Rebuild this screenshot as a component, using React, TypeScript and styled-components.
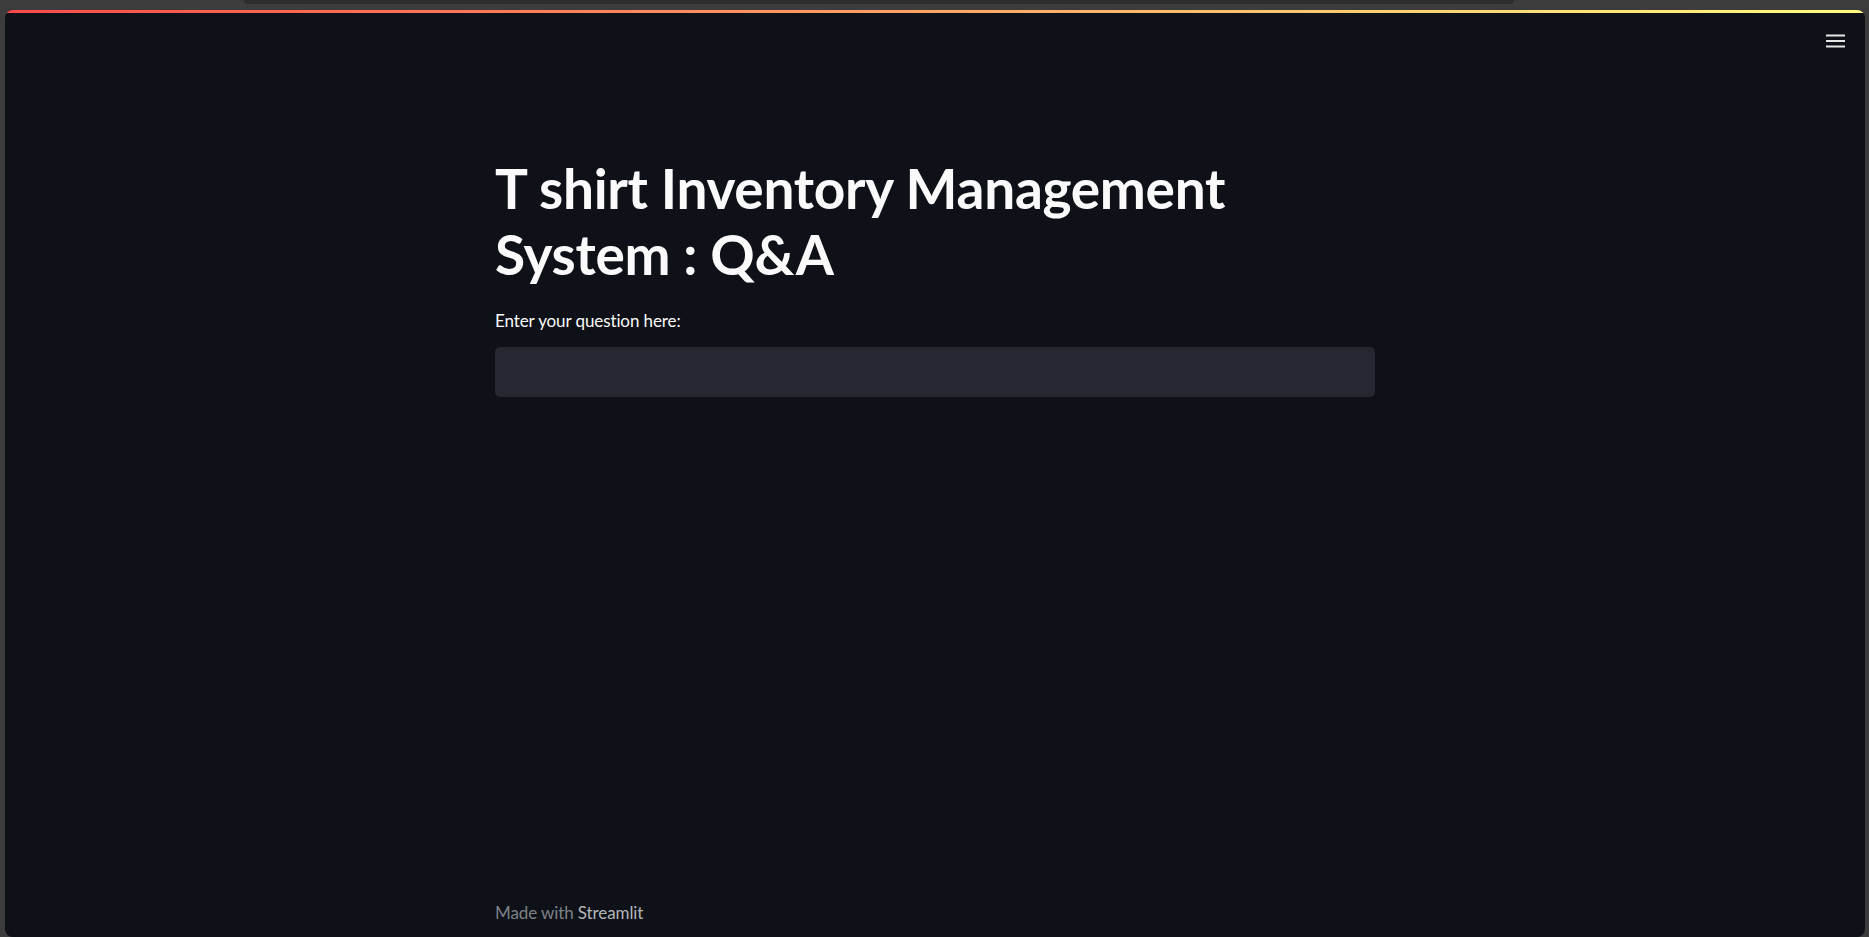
import React from "react";
import styled, { createGlobalStyle } from "styled-components";

const Global = createGlobalStyle`
  html, body { margin: 0; padding: 0; background: #3c3c3c; }
  body { font-family: Lato, "Noto Sans", sans-serif; overflow: hidden; }
  * { box-sizing: border-box; }
`;

const Screen = styled.div`
  width: 1869px;
  height: 937px;
  display: flex;
  flex-direction: column;
  background: #3c3c3c;
`;

const ChromeStrip = styled.div`
  height: 10px;
  display: flex;
  align-items: flex-start;
  padding-left: 244px;
`;

const ChromePill = styled.div`
  width: 1270px;
  height: 4px;
  background: #2d2d2d;
  border-radius: 0 0 8px 8px;
`;

const AppWindow = styled.div`
  flex: 1;
  margin: 0 4px 0 5px;
  border-radius: 8px;
  overflow: hidden;
  background: #0e1117;
  display: flex;
  flex-direction: column;
`;

const Decoration = styled.div`
  height: 3px;
  flex: none;
  background: linear-gradient(90deg, rgb(255, 75, 75), rgb(255, 253, 128));
`;

const Toolbar = styled.div`
  height: 56px;
  flex: none;
  display: flex;
  align-items: center;
  justify-content: flex-end;
  padding-right: 20px;
`;

const MenuButton = styled.button`
  width: 19px;
  height: 14px;
  padding: 0;
  border: none;
  background: transparent;
  display: flex;
  cursor: pointer;
`;

const Main = styled.main`
  flex: 1;
  display: flex;
  flex-direction: column;
  align-items: center;
`;

const Block = styled.div`
  width: 880px;
  flex: 1;
  padding-top: 61px;
  display: flex;
  flex-direction: column;
`;

const Title = styled.h1`
  margin: 0;
  padding: 25px 0 20px;
  font-family: Lato, "Noto Sans", sans-serif;
  font-weight: 700;
  font-size: 55px;
  letter-spacing: -0.3px;
  line-height: 1.2;
  color: #fafafa;
  max-width: 740px;
`;

const Label = styled.label`
  display: block;
  font-size: 17px;
  letter-spacing: -0.1px;
  line-height: 1.6;
  color: #fafafa;
  margin-bottom: 13px;
`;

const Input = styled.input`
  width: 100%;
  height: 50px;
  border: none;
  border-radius: 5px;
  background: #262730;
  color: #fafafa;
  font-family: inherit;
  font-size: 17.5px;
  padding: 0 16px;
  outline: none;
`;

const Footer = styled.footer`
  width: 880px;
  height: 35px;
  font-size: 17px;
  letter-spacing: -0.1px;
  color: #7e8188;
`;

const FooterLink = styled.span`
  color: #b4b6ba;
`;

export default function App() {
  return (
    <>
      <Global />
      <Screen>
        <ChromeStrip>
          <ChromePill />
        </ChromeStrip>
        <AppWindow>
          <Decoration />
          <Toolbar>
            <MenuButton aria-label="Main menu">
              <svg width="19" height="14" viewBox="0 0 19 14">
                <rect x="0" y="0.5" width="19" height="2" fill="#e6e6e6" />
                <rect x="0" y="6" width="19" height="2" fill="#e6e6e6" />
                <rect x="0" y="11.5" width="19" height="2" fill="#e6e6e6" />
              </svg>
            </MenuButton>
          </Toolbar>
          <Main>
            <Block>
              <Title>T shirt Inventory Management System : Q&amp;A</Title>
              <Label htmlFor="q">Enter your question here:</Label>
              <Input id="q" type="text" />
            </Block>
            <Footer>
              Made with <FooterLink>Streamlit</FooterLink>
            </Footer>
          </Main>
        </AppWindow>
      </Screen>
    </>
  );
}
